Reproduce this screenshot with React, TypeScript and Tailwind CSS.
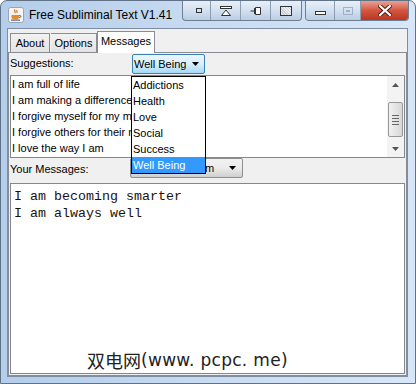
import React from "react";

const suggestions = [
  "I am full of life",
  "I am making a difference",
  "I forgive myself for my mistakes",
  "I forgive others for their mistakes",
  "I love the way I am",
];

const categories = ["Addictions", "Health", "Love", "Social", "Success", "Well Being"];

function JavaIcon() {
  return (
    <svg width="16" height="16" viewBox="0 0 16 16">
      <rect x="0.5" y="0.5" width="15" height="15" rx="2" fill="#f4f4f4" stroke="#9aa4b0" />
      <path d="M7 2.5c-1.5 1.2 1.2 2-0.2 3.6M9 3.2c-1 0.9 0.8 1.5-0.3 2.6" stroke="#e2721b" strokeWidth="1.3" fill="none" />
      <path d="M3.5 8h7.5v2.2c0 1.3-1.2 2-2.4 2H5.9c-1.2 0-2.4-0.7-2.4-2z" fill="#e78a2c" />
      <path d="M11 8.6h1.2c1 0 1 1.8 0 1.8H11" stroke="#4a6ea8" strokeWidth="1" fill="none" />
      <path d="M3 13.2h9" stroke="#4a6ea8" strokeWidth="1.2" />
    </svg>
  );
}

function DownArrow() {
  return (
    <svg width="7" height="4" viewBox="0 0 7 4">
      <path d="M0 0h7L3.5 4z" fill="#000" />
    </svg>
  );
}

export default function App() {
  return (
    <div className="relative flex h-[384px] w-[416px] flex-col overflow-hidden rounded-t-[7px] border border-[#5f7286] bg-gradient-to-r from-[#b4cdea] via-[#c8dbf1] to-[#d8e7f8] font-['Liberation_Sans',Arial,sans-serif] text-[11px] text-black">
      {/* title bar */}
      <div className="flex h-[27px] items-start">
        <div className="ml-[7px] mt-[6px]">
          <JavaIcon />
        </div>
        <div className="ml-[5px] mt-[6px] text-[12px] leading-[16px] text-black">
          Free Subliminal Text V1.41
        </div>

        <div className="ml-auto flex h-[20px] overflow-hidden rounded-b-[4px] border border-t-0 border-[#6e7f93] bg-gradient-to-b from-[#e9eff7] via-[#d3e0ef] to-[#b9cde5]">
          <div className="flex w-[28px] items-center justify-center border-r border-[#8d9db0] pl-[4px]">
            <div className="h-[5px] w-[6px] border border-[#333]" />
          </div>
          <div className="flex w-[30px] items-center justify-center border-r border-[#8d9db0]">
            <svg width="12" height="10" viewBox="0 0 12 10">
              <rect x="0.5" y="0.5" width="11" height="2" fill="#fff" stroke="#333" strokeWidth="1" />
              <path d="M6 4L1.5 9.5h9z" fill="#fff" stroke="#333" strokeWidth="1" />
            </svg>
          </div>
          <div className="flex w-[30px] items-center justify-center border-r border-[#8d9db0]">
            <svg width="12" height="10" viewBox="0 0 12 10">
              <path d="M5.5 1.5h5v7h-5z" fill="#fff" stroke="#333" strokeWidth="1" />
              <path d="M0.5 5h5M4.5 2v6" stroke="#333" strokeWidth="1" />
            </svg>
          </div>
          <div className="flex w-[30px] items-center justify-center">
            <div className="h-[10px] w-[12px] border border-[#333] bg-[repeating-linear-gradient(45deg,#c9ced6_0px,#c9ced6_1px,#eef1f5_1px,#eef1f5_2px)]" />
          </div>
        </div>

        <div className="ml-[3px] mr-[6px] flex h-[20px] overflow-hidden rounded-b-[4px] border border-t-0 border-[#6e7f93]">
          <div className="flex w-[29px] items-end justify-center border-r border-[#8d9db0] bg-gradient-to-b from-[#e9eff7] via-[#d3e0ef] to-[#b9cde5] pb-[5px]">
            <div className="h-[4px] w-[11px] border border-[#333] bg-white" />
          </div>
          <div className="flex w-[26px] items-center justify-center border-r border-[#8d9db0] bg-gradient-to-b from-[#e9eff7] via-[#d3e0ef] to-[#b9cde5]">
            <div className="h-[8px] w-[10px] border border-[#9fb1c6]">
              <div className="mx-[2px] mt-[2px] h-[2px] border border-[#9fb1c6]" />
            </div>
          </div>
          <div className="flex w-[47px] items-center justify-center bg-gradient-to-b from-[#e8a195] via-[#d4563f] to-[#b93521]">
            <svg width="14" height="11" viewBox="0 0 14 11">
              <path d="M2 1l10 9M12 1L2 10" stroke="#4a1a12" strokeWidth="4" strokeLinecap="square" />
              <path d="M2 1l10 9M12 1L2 10" stroke="#fff" strokeWidth="2.2" strokeLinecap="square" />
            </svg>
          </div>
        </div>
      </div>

      {/* client area */}
      <div className="mb-[6px] ml-[6px] flex w-[401px] flex-1 flex-col border border-[#7d8ea3] bg-[#f0f0f0]">
        {/* tabs */}
        <div className="flex h-[23px] items-end pl-[2px]">
          <div className="flex h-[19px] w-[40px] items-center justify-center border border-b-0 border-[#898c95] bg-gradient-to-b from-[#f2f2f2] to-[#e3e3e3]">
            About
          </div>
          <div className="ml-[1px] flex h-[19px] w-[46px] items-center justify-center border border-b-0 border-l-0 border-[#898c95] bg-gradient-to-b from-[#f2f2f2] to-[#e3e3e3]">
            Options
          </div>
          <div className="relative z-10 -mb-[1px] flex h-[22px] w-[58px] items-start justify-center border border-b-0 border-[#898c95] bg-white pt-[3px] leading-[13px]">
            Messages
          </div>
        </div>

        {/* tab panel */}
        <div className="flex flex-1 flex-col border border-[#898c95] px-[1px]">
          <div className="flex h-[22px] items-start">
            <div className="w-[122px] pt-[2px]">Suggestions:</div>
            <div className="mt-[1px] flex h-[20px] w-[73px] items-center justify-between rounded-[2px] border border-[#3c7fb1] bg-gradient-to-b from-[#eaf6fd] via-[#d7effc] to-[#a7d9f5] pl-[1px] pr-[5px]">
              <span>Well Being</span>
              <DownArrow />
            </div>
          </div>

          <div className="flex h-[83px] border border-[#828790] bg-white">
            <div className="flex-1 pl-[1px]">
              {suggestions.map((s) => (
                <div key={s} className="h-[16px] whitespace-nowrap leading-[16px]">
                  {s}
                </div>
              ))}
            </div>
            <div className="flex w-[17px] flex-col items-center bg-[#f3f3f3] pb-[3px]">
              <div className="flex h-[17px] items-center justify-center">
                <svg width="7" height="4" viewBox="0 0 7 4">
                  <path d="M0 4h7L3.5 0z" fill="#555" />
                </svg>
              </div>
              <div className="mt-[9px] flex h-[35px] w-[15px] flex-col items-center justify-center gap-[2px] rounded-[2px] border border-[#979797] bg-gradient-to-r from-[#f2f2f2] to-[#d7d7d7]">
                <div className="h-px w-[7px] bg-[#666]" />
                <div className="h-px w-[7px] bg-[#666]" />
                <div className="h-px w-[7px] bg-[#666]" />
                <div className="h-px w-[7px] bg-[#666]" />
              </div>
              <div className="mt-auto flex h-[10px] items-center justify-center">
                <svg width="7" height="4" viewBox="0 0 7 4">
                  <path d="M0 0h7L3.5 4z" fill="#555" />
                </svg>
              </div>
            </div>
          </div>

          <div className="flex h-[25px] items-start">
            <div className="w-[120px] pt-[3px]">Your Messages:</div>
            <div className="flex h-[20px] w-[113px] items-center justify-between rounded-[2px] border border-[#8e8f8f] bg-gradient-to-b from-[#f2f2f2] via-[#ebebeb] to-[#cfcfcf] pl-[3px] pr-[6px]">
              <span className="whitespace-nowrap">Show at random</span>
              <DownArrow />
            </div>
          </div>

          <div className="mb-[1px] flex-1 border border-[#828790] bg-white pl-[3px] pt-[4px] font-['Liberation_Mono','Courier_New',monospace] text-[13.333px] leading-[17px] text-[#1c1208]">
            <div>I am becoming smarter</div>
            <div>I am always well</div>
          </div>
        </div>
      </div>

      {/* open combo popup */}
      <div className="absolute left-[130px] top-[75px] w-[75px] border border-black bg-white">
        {categories.map((c) => (
          <div
            key={c}
            className={
              c === "Well Being"
                ? "h-[16px] bg-[#3399ff] pl-[1px] leading-[16px] text-white"
                : "h-[16px] pl-[1px] leading-[16px]"
            }
          >
            {c}
          </div>
        ))}
      </div>

      {/* watermark */}
      <div className="absolute left-[86px] top-[349px] flex items-center whitespace-nowrap leading-[20px] text-[#222]">
        <span className="font-['Noto_Sans_CJK_SC',sans-serif] text-[18px]">双电网</span>
        <span className="font-['DejaVu_Sans','Noto_Sans',sans-serif] text-[17px] tracking-[0.3px]">(www. pcpc. me)</span>
      </div>
    </div>
  );
}
